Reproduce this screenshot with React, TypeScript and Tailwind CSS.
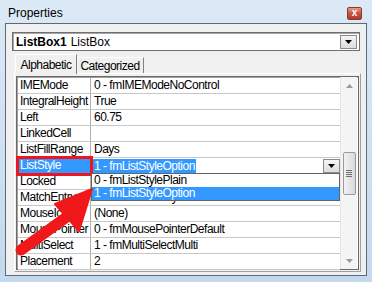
import React from 'react'

interface Row {
  name: string
  value: string
}

const ROWS: Row[] = [
  { name: 'IMEMode', value: '0 - fmIMEModeNoControl' },
  { name: 'IntegralHeight', value: 'True' },
  { name: 'Left', value: '60.75' },
  { name: 'LinkedCell', value: '' },
  { name: 'ListFillRange', value: 'Days' },
  { name: 'ListStyle', value: '1 - fmListStyleOption' },
  { name: 'Locked', value: 'False' },
  { name: 'MatchEntry', value: '0 - fmMatchEntryFirstLetter' },
  { name: 'MouseIcon', value: '(None)' },
  { name: 'MousePointer', value: '0 - fmMousePointerDefault' },
  { name: 'MultiSelect', value: '1 - fmMultiSelectMulti' },
  { name: 'Placement', value: '2' },
]

function DownTriangle() {
  return (
    <svg width="7" height="4" viewBox="0 0 7 4">
      <path d="M0 0 H7 L3.5 4 Z" fill="#000" />
    </svg>
  )
}

export default function App() {
  return (
    <div className="relative w-[372px] h-[282px] overflow-hidden bg-gradient-to-b from-[#dce9f6] to-[#c4d8ee] font-['Liberation_Sans',Arial,sans-serif] text-black">
      {/* title bar */}
      <div className="h-[23px] flex items-center justify-between pl-[8px] pr-[10px]">
        <span className="text-[12px] leading-none mt-[3px]">Properties</span>
        <div className="w-[15px] h-[13px] mt-[3px] rounded-[2px] border border-[#8a3a30] bg-gradient-to-b from-[#e49a8c] via-[#c9503f] to-[#b23a2a] flex items-center justify-center">
          <span className="text-white text-[10px] font-bold leading-none -mt-[1px]">x</span>
        </div>
      </div>

      {/* window body */}
      <div className="mx-[5px] h-[253px] border border-[#5c6b7c] bg-[#f0f0f0] pl-[6px] pr-[6px] pt-[8px]">
        {/* object combo */}
        <div className="h-[19px] w-[348px] border border-[#6f6f6f] shadow-[inset_1px_1px_0_#a8a8a8] bg-white flex items-center pl-[3px] pr-[2px]">
          <span className="text-[12px] font-bold">ListBox1</span>
          <span className="text-[12px] ml-[4px]">ListBox</span>
          <div className="ml-auto w-[17px] h-[14px] border border-[#8c8c8c] bg-gradient-to-b from-[#f6f6f6] to-[#dcdcdc] flex items-center justify-center">
            <DownTriangle />
          </div>
        </div>

        {/* tabs */}
        <div className="flex items-end h-[22px] pl-[3px]">
          <div className="h-[20px] w-[62px] border-t border-l border-r border-t-[#ffffff] border-l-[#ffffff] border-r-[#808080] bg-[#f0f0f0] flex items-center justify-center text-[12px] tracking-[-0.5px] relative z-10 -mb-[1px]">
            Alphabetic
          </div>
          <div className="h-[16px] w-[67px] border-t border-r border-t-[#ffffff] border-r-[#808080] flex items-center justify-center text-[12px] tracking-[-0.5px]">
            Categorized
          </div>
        </div>

        {/* grid panel */}
        <div className="ml-[2px] w-[347px] h-[199px] border border-[#ffffff] border-r-[#a0a0a0] border-b-[#a0a0a0] pl-[1px] pt-[2px]">
          <div className="w-[343px] h-[194px] border border-[#6a6a6a] shadow-[inset_1px_1px_0_#a0a0a0] bg-white flex">
            <div className="relative w-[323px] pl-[1px] pt-[1px]">
              {ROWS.map((r, i) => {
                const active = r.name === 'ListStyle'
                return (
                  <div key={r.name} className="flex h-[16px] border-b border-[#c8c8c8]">
                    <div
                      className={`w-[73px] pl-[2px] text-[12px] tracking-[-0.5px] leading-[15px] border-r border-[#b0b0b0] whitespace-nowrap overflow-hidden ${
                        active ? 'bg-[#3399ff] text-white' : ''
                      }`}
                    >
                      {r.name}
                    </div>
                    {active ? (
                      <div className="flex-1 flex items-center pl-[2px]">
                        <span className="bg-[#3399ff] text-white text-[12px] tracking-[-0.5px] leading-[14px] px-[1px]">{r.value}</span>
                        <div className="ml-auto w-[17px] h-[14px] border border-[#8c8c8c] bg-gradient-to-b from-[#f6f6f6] to-[#dcdcdc] flex items-center justify-center">
                          <DownTriangle />
                        </div>
                      </div>
                    ) : (
                      <div className="flex-1 pl-[3px] text-[12px] tracking-[-0.5px] leading-[15px] whitespace-nowrap overflow-hidden">
                        {i === 6 ? '' : r.value}
                      </div>
                    )}
                  </div>
                )
              })}

              {/* red highlight around ListStyle name */}
              <div className="absolute left-[-1px] top-[79px] w-[77px] h-[20px] border-[3px] border-[#f0141c]" />

              {/* dropdown list */}
              <div className="absolute left-[74px] top-[96px] w-[249px] h-[28px] border border-[#646464] bg-white">
                <div className="h-[13px] pl-[2px] text-[12px] tracking-[-0.5px] leading-[13px]">0 - fmListStylePlain</div>
                <div className="h-[13px] pl-[2px] text-[12px] tracking-[-0.5px] leading-[13px] bg-[#3399ff] text-white">1 - fmListStyleOption</div>
              </div>
            </div>

            {/* scrollbar */}
            <div className="w-[17px] bg-[#f4f4f4] border-l border-[#e6e6e6] flex flex-col items-center">
              <div className="h-[17px] flex items-center justify-center">
                <svg width="7" height="4" viewBox="0 0 7 4">
                  <path d="M0 4 H7 L3.5 0 Z" fill="#9a9a9a" />
                </svg>
              </div>
              <div className="mt-[58px] w-[13px] h-[43px] rounded-[2px] border border-[#9a9a9a] bg-gradient-to-r from-[#f2f2f2] to-[#d8d8d8] flex flex-col items-center justify-center gap-[1px]">
                <div className="w-[6px] h-[1px] bg-[#707070]" />
                <div className="w-[6px] h-[1px] bg-[#707070]" />
                <div className="w-[6px] h-[1px] bg-[#707070]" />
                <div className="w-[6px] h-[1px] bg-[#707070]" />
              </div>
              <div className="mt-auto h-[17px] flex items-center justify-center">
                <svg width="7" height="4" viewBox="0 0 7 4">
                  <path d="M0 0 H7 L3.5 4 Z" fill="#9a9a9a" />
                </svg>
              </div>
            </div>
          </div>
        </div>
      </div>

      {/* red arrow */}
      <svg className="absolute left-0 top-0 pointer-events-none" width="372" height="282" viewBox="0 0 372 282">
        <line x1="21" y1="250" x2="68" y2="216" stroke="#f01818" strokeWidth="11" strokeLinecap="round" />
        <path d="M92 189 L55 204 L79 231 Z" fill="#f01818" stroke="#f01818" strokeWidth="2" strokeLinejoin="round" />
      </svg>
    </div>
  )
}
